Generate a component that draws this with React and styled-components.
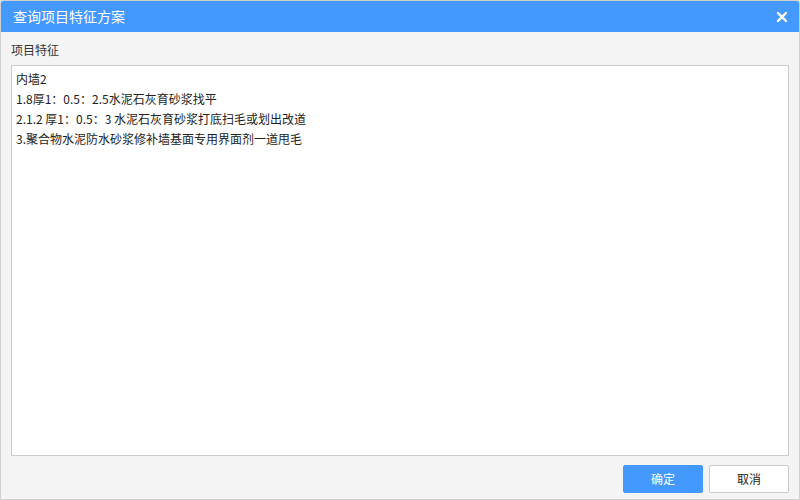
import React from "react";
import styled, { createGlobalStyle } from "styled-components";

const GlobalStyle = createGlobalStyle`
  html, body {
    margin: 0;
    padding: 0;
    background: #ffffff;
  }
  body {
    font-family: "Noto Sans CJK SC", "Noto Sans", sans-serif;
  }
`;

const Dialog = styled.div`
  box-sizing: border-box;
  width: 800px;
  height: 500px;
  display: flex;
  flex-direction: column;
  background: #f4f4f4;
  border: 1px solid #cfcfcf;
  border-radius: 3px 3px 0 0;
  overflow: hidden;
`;

const Header = styled.div`
  height: 31px;
  flex: none;
  display: flex;
  align-items: center;
  justify-content: space-between;
  padding: 0 11px 0 12px;
  background: #4499ff;
  color: #ffffff;
`;

const Title = styled.span`
  font-size: 14px;
  line-height: 31px;
`;

const CloseButton = styled.button`
  width: 12px;
  height: 12px;
  padding: 0;
  border: 0;
  background: transparent;
  display: flex;
  align-items: center;
  justify-content: center;
  cursor: pointer;
`;

const Body = styled.div`
  flex: 1;
  display: flex;
  flex-direction: column;
  padding: 8px 10px 0 10px;
  min-height: 0;
`;

const Label = styled.div`
  font-size: 12px;
  color: #333333;
  line-height: 20px;
  margin-bottom: 5px;
`;

const TextBox = styled.div`
  flex: 1;
  box-sizing: border-box;
  background: #ffffff;
  border: 1px solid #cccccc;
  padding: 3px 4px;
  font-size: 12px;
  line-height: 20px;
  color: #222222;
`;

const Line = styled.div`
  white-space: pre;
`;

const Footer = styled.div`
  flex: none;
  height: 43px;
  display: flex;
  justify-content: flex-end;
  align-items: center;
  gap: 6px;
  padding: 2px 10px 0 0;
  box-sizing: border-box;
`;

const Button = styled.button`
  width: 80px;
  height: 28px;
  box-sizing: border-box;
  border-radius: 2px;
  font-family: "Noto Sans CJK SC", "Noto Sans", sans-serif;
  font-size: 12px;
  cursor: pointer;
  border: 1px solid ${(p) => (p.$primary ? "#4499ff" : "#cccccc")};
  background: ${(p) => (p.$primary ? "#4499ff" : "#ffffff")};
  color: ${(p) => (p.$primary ? "#ffffff" : "#222222")};
`;

const lines = [
  "内墙2",
  "1.8厚1：0.5：2.5水泥石灰育砂浆找平",
  "2.1.2 厚1：0.5：3 水泥石灰育砂浆打底扫毛或划出改道",
  "3.聚合物水泥防水砂浆修补墙基面专用界面剂一道甩毛",
];

export default function App() {
  return (
    <>
      <GlobalStyle />
      <Dialog>
        <Header>
          <Title>查询项目特征方案</Title>
          <CloseButton aria-label="关闭">
            <svg width="10" height="10" viewBox="0 0 10 10">
              <path
                d="M1 1 L9 9 M9 1 L1 9"
                stroke="#ffffff"
                strokeWidth="2.4"
                strokeLinecap="square"
              />
            </svg>
          </CloseButton>
        </Header>
        <Body>
          <Label>项目特征</Label>
          <TextBox>
            {lines.map((l) => (
              <Line key={l}>{l}</Line>
            ))}
          </TextBox>
        </Body>
        <Footer>
          <Button $primary>确定</Button>
          <Button>取消</Button>
        </Footer>
      </Dialog>
    </>
  );
}
